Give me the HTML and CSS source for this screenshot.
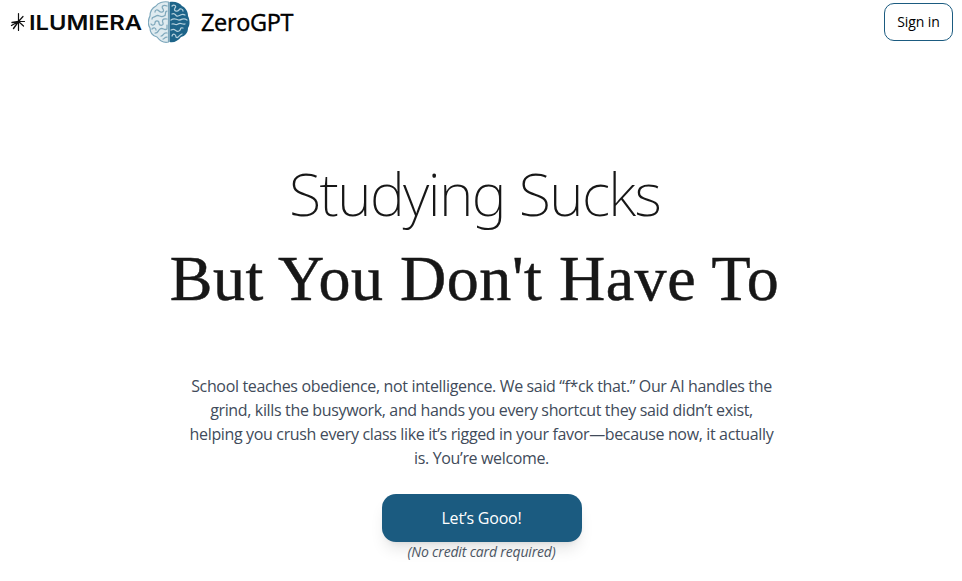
FILE: index.html
```html
<!DOCTYPE html>
<html lang="en">
<head>
<meta charset="utf-8">
<title>ZeroGPT</title>
<link rel="stylesheet" href="styles.css">
</head>
<body>
<header class="topbar">
  <a class="brand">
    <svg class="spark" viewBox="0 0 16 20" width="16" height="20" fill="none" stroke="#111" stroke-width="1.2" stroke-linecap="round">
      <path d="M8.5 1.500V18.500M8.500 9.500H14.500M8.500 9.500L13 4.500M8.500 9.500L13.500 14"/>
      <path d="M8.500 9.500L2 10.500M8.500 9.500L1.500 13.500M8.500 9.500L3.500 16.500" stroke-width="1.400"/>
    </svg>
    <svg class="wordmark" viewBox="0 0 112 38" width="112" height="38">
      <text x="0" y="26.500" textLength="113" lengthAdjust="spacingAndGlyphs">ILUMIERA</text>
    </svg>
    <svg class="brain" viewBox="0 0 42 42" width="42" height="42" fill="none" stroke-linecap="round" stroke-linejoin="round">
      <path d="M20.500 1C15 0 10 2 8 5C4 7 2 11 2 15C0 19 0 24 2 27C2 32 5 35 9 36C12 40 16 42 20.500 41Z" fill="#dfebf0" stroke="#7ea8bc" stroke-width="1.200"/>
      <path d="M21.500 1C27 0 32 2 34 5C38 7 40 11 40 15C42 19 42 24 40 27C40 32 37 35 33 36C30 40 26 42 21.500 41Z" fill="#1d6489"/>
      <path d="M19 5C15 3 13 6 15 8C17 11 13 12 11 10C9 8 7 9 7 11M19 10C16 10 19 14 16 15C12 17 11 13 8 15C6 17 4 15 4 18M19 18C14 17 14 20 15 22C16 25 11 25 11 22C11 19 7 19 7 22C7 24 4 25 3 23M19 24V28C16 30 15 26 12 28C9 30 11 32 7 32M4 28C6 26 8 27 8 29M19 32C15 31 16 35 13 35M19 36C16 36 17 38 15 38" stroke="#80a9bc" stroke-width="1.250"/>
      <path d="M24 5C26 3 29 5 27 7C25 10 29 11 31 9C32 7 35 8 35 10M24 13C28 11 27 16 30 15C34 14 34 12 37 14M23 19C27 16 28 19 31 19C35 19 35 16 39 19M24 23C27 22 27 25 30 23C33 21 34 24 37 23M23 29C28 26 27 32 31 30C34 29 31 26 35 27M24 35C25 32 28 33 28 36C30 38 31 34 34 33" stroke="#b5d0dc" stroke-width="1.250"/>
    </svg>
    <span class="product">ZeroGPT</span>
  </a>
  <button class="signin">Sign in</button>
</header>
<main class="hero">
  <h1 class="title">
    <span class="title-light">Studying Sucks</span>
    <span class="title-serif">But You Don't Have To</span>
  </h1>
  <p class="lead">School teaches obedience, not intelligence. We said “f*ck that.” Our AI handles the grind, kills the busywork, and hands you every shortcut they said didn’t exist, helping you crush every class like it’s rigged in your favor—because now, it actually is. You’re welcome.</p>
  <button class="cta">Let’s Gooo!</button>
  <p class="note">(No credit card required)</p>
</main>
</body>
</html>
```
FILE: styles.css
```css
* { box-sizing: border-box; margin: 0; }
body { background: #fff; font-family: "Open Sans", "Noto Sans", sans-serif; color: #000; }
button { font: inherit; }
.topbar { display: flex; justify-content: space-between; align-items: flex-start; height: 48px; padding: 3px 9px 0 10px; }
.brand { display: flex; align-items: center; height: 38px; }
.spark { flex: none; }
.wordmark { flex: none; margin-left: 3px; overflow: visible; }
.wordmark text { font: 600 20.500px Inter, sans-serif; fill: #0a0a0a; }
.brain { flex: none; margin-left: 7px; }
.product { margin-left: 11px; font-size: 23.500px; line-height: 38px; -webkit-text-stroke: .4px #000; letter-spacing: -.35px; white-space: nowrap; }
.signin { width: 69px; height: 38px; padding: 0 0 2px; border: 1px solid #1b5b80; border-radius: 10px; background: #fff; font-size: 14px; letter-spacing: -.1px; }
.hero { display: flex; flex-direction: column; align-items: center; padding: 103px 0 0 1px; }
.title { display: flex; flex-direction: column; align-items: center; padding-right: 14px; color: #171717; font-weight: 400; }
.title-light { font: 200 59px/84px "Noto Sans", sans-serif; letter-spacing: -1.6px; white-space: nowrap; }
.title-serif { font: 400 64px/88px "Liberation Serif", serif; letter-spacing: .55px; -webkit-text-stroke: .5px #171717; white-space: nowrap; }
.lead { width: 590px; margin-top: 51px; text-align: center; font-size: 16px; line-height: 24px; letter-spacing: -.35px; color: #414b5a; }
.cta { width: 200px; height: 48px; margin-top: 24px; border: 0; border-radius: 14px; background: #1b5b80; color: #fff; font-size: 16px; letter-spacing: -.2px; box-shadow: 0 10px 15px -3px rgba(0,0,0,.1), 0 4px 6px -4px rgba(0,0,0,.1); }
.note { font-size: 14px; line-height: 20px; font-style: italic; letter-spacing: -.17px; color: #4b5563; }
```
